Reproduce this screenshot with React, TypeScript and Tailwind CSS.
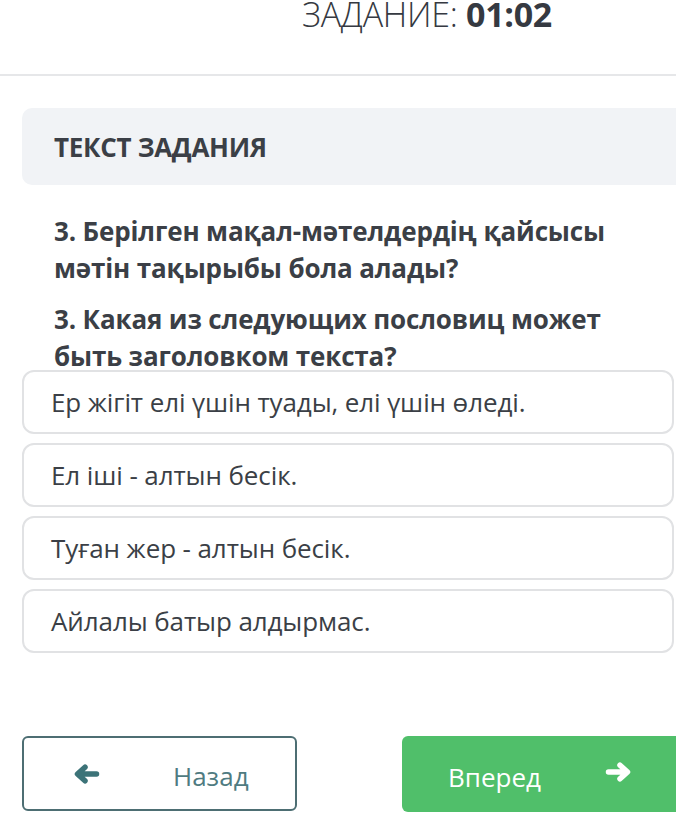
import React from 'react';

const options = [
  'Ер жігіт елі үшін туады, елі үшін өледі.',
  'Ел іші - алтын бесік.',
  'Туған жер - алтын бесік.',
  'Айлалы батыр алдырмас.',
];

function Arrow({ dir, className }: { dir: 'left' | 'right'; className?: string }) {
  return (
    <svg
      width="27"
      height="20"
      viewBox="0 0 27 20"
      fill="none"
      stroke="currentColor"
      strokeWidth="5.5"
      strokeLinecap="round"
      strokeLinejoin="round"
      className={className}
      style={dir === 'right' ? { transform: 'scaleX(-1)' } : undefined}
    >
      <path d="M23.5 10H5M12 3.2L4.5 10L12 16.8" />
    </svg>
  );
}

export default function App() {
  return (
    <div className="w-[676px] h-[834px] overflow-hidden bg-white font-['Open_Sans',sans-serif] text-[#3b3f46]">
      {/* Header */}
      <header className="h-[76px] flex items-start border-b-2 border-[#e6e7e9]">
        <div className="pl-[302px] text-[34px] leading-[28px] font-light tracking-[-0.3px] whitespace-nowrap text-[#353941]">
          ЗАДАНИЕ: <span className="font-bold">01:02</span>
        </div>
      </header>

      {/* Task */}
      <section className="pl-[22px] pt-[32px]">
        <div className="h-[77px] rounded-l-[10px] bg-[#f1f3f6] pl-[32px] flex items-center">
          <h2 className="text-[26px] font-bold leading-none tracking-[-0.3px]">ТЕКСТ ЗАДАНИЯ</h2>
        </div>

        <div className="pl-[32px] pt-[28px] pr-[40px] font-bold text-[26px] leading-[37px] tracking-[-0.15px]">
          <p>3. Берілген мақал-мәтелдердің қайсысы мәтін тақырыбы бола алады?</p>
          <p className="mt-[14px]">3. Какая из следующих пословиц может быть заголовком текста?</p>
        </div>

        <div className="relative -mt-[5px] flex flex-col gap-[9px] pr-[2px]">
          {options.map((o) => (
            <div
              key={o}
              className="h-[64px] rounded-[12px] border-2 border-[#e1e2e4] bg-white pl-[27px] flex items-center text-[26px] tracking-[-0.1px]"
            >
              {o}
            </div>
          ))}
        </div>
      </section>

      {/* Buttons */}
      <div className="mt-[83px] pl-[22px] flex gap-[105px]">
        <button className="w-[275px] h-[75px] rounded-[6px] border-2 border-[#4d6e73] flex items-center pl-[49px] text-[#4f7b81]">
          <Arrow dir="left" className="text-[#3c7378]" />
          <span className="ml-[73px] mt-[6px] text-[26px]">Назад</span>
        </button>
        <button className="flex-1 h-[76px] rounded-l-[6px] bg-[#50bf6a] flex items-center pl-[46px] text-white">
          <span className="mt-[6px] text-[26px]">Вперед</span>
          <Arrow dir="right" className="ml-[64px] -mt-[4px]" />
        </button>
      </div>
    </div>
  );
}
